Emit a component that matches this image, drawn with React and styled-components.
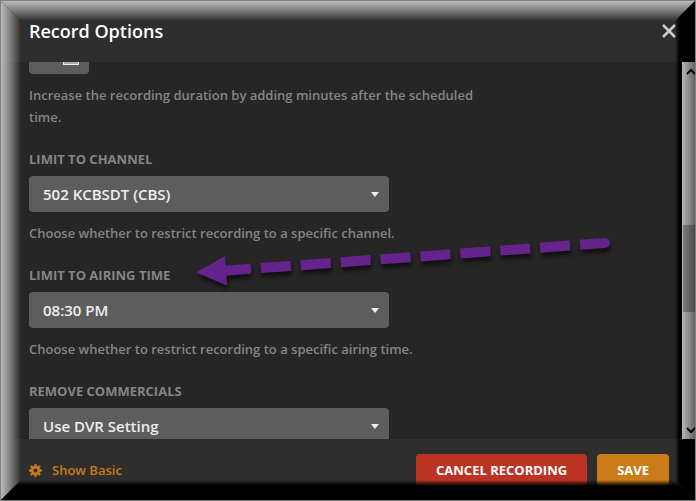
import React, { useLayoutEffect, useRef } from 'react';
import styled, { createGlobalStyle } from 'styled-components';

const GlobalStyle = createGlobalStyle`
  * {
    box-sizing: border-box;
  }
  body {
    margin: 0;
    background: #262626;
    font-family: "Open Sans", "Noto Sans", sans-serif;
    font-weight: 600;
  }
`

const Dialog = styled.div`
  position: relative;
  display: flex;
  flex-direction: column;
  height: 100vh;
  background: #2e2e2e;
  overflow: hidden;
`

const Header = styled.header`
  display: flex;
  flex: none;
  align-items: center;
  justify-content: space-between;
  height: 62px;
  padding: 0 20px 0 29px;
`

const Title = styled.h1`
  margin: 0;
  color: #fff;
  font-size: 18px;
  font-weight: 600;
  line-height: 24px;
`

const CloseButton = styled.button`
  display: flex;
  padding: 0;
  border: 0;
  background: none;
  color: #ccc;
`

const Body = styled.div`
  position: relative;
  display: flex;
  flex: 1;
  min-height: 0;
  background: #262626;
`

const Content = styled.form`
  flex: 1;
  padding: 0 29px;
  overflow: auto;
  scrollbar-width: none;
`

const Field = styled.div`
  margin-bottom: 21px;
`

const Label = styled.label`
  display: block;
  margin-bottom: 7px;
  color: #858585;
  font-size: 13px;
  font-weight: 700;
  line-height: 20px;
  text-transform: uppercase;
`

const Help = styled.p`
  max-width: 460px;
  margin: 10px 0 0;
  color: #858585;
  font-size: 13px;
  line-height: 22px;
`

const Control = styled.div`
  display: flex;
  align-items: center;
  width: ${props => (props.$small ? '60px' : '360px')};
  height: 36px;
  padding-right: 10px;
  border-radius: 4px;
  background: #5d5d5d;
  color: #eee;
`

const Select = styled.select`
  flex: 1;
  min-width: 0;
  height: 36px;
  padding: 0 14px;
  border: 0;
  appearance: none;
  background: none;
  color: #eee;
  font: 600 15px "Open Sans", "Noto Sans", sans-serif;
`

const NumberInput = styled.input`
  flex: 1;
  min-width: 0;
  border: 0;
  background: none;
`

const Stepper = styled.span`
  width: 16px;
  height: 18px;
  border: 1px solid #eee;
  background: #aaa;
  box-shadow: inset 0 0 0 1px #aaa;
`

const ScrollTrack = styled.div`
  z-index: 2;
  display: flex;
  flex: none;
  flex-direction: column;
  align-items: flex-end;
  width: 13px;
  margin-right: 1px;
  background: linear-gradient(to right, #b5b5b5, #646464);
`

const ScrollThumb = styled.div`
  flex: 87;
  width: 12px;
  background: linear-gradient(to right, #7d7d7d, #484848);
`

const ScrollSpace = styled.div`
  display: flex;
  flex: ${props => props.$grow};
  flex-direction: column;
  justify-content: ${props => (props.$end ? 'flex-end' : 'flex-start')};
  padding: 6px 0 5px;
`

const Footer = styled.footer`
  display: flex;
  flex: none;
  align-items: center;
  gap: 10px;
  height: 62px;
  padding: 0 27px 0 29px;
`

const BasicLink = styled.a`
  display: flex;
  align-items: center;
  gap: 10px;
  margin-right: auto;
  color: #cc7b19;
  font-size: 13px;
  text-decoration: none;
`

const Button = styled.button`
  height: 32px;
  padding: 0 20px;
  border: 0;
  border-radius: 4px;
  background: ${props => (props.$danger ? '#bc3323' : '#cc7b19')};
  color: #fff;
  font: 700 13px "Open Sans", "Noto Sans", sans-serif;
  text-transform: uppercase;
`

const Bevel = styled.div`
  position: absolute;
  inset: 0;
  pointer-events: none;
`

const TopEdge = styled(Bevel)`
  bottom: auto;
  height: 21px;
  background: linear-gradient(to bottom, #c0c0c0, rgba(160, 160, 160, .7) 50%, rgba(46, 46, 46, 0));
  clip-path: polygon(0 0, 100% 0, calc(100% - 21px) 100%, 21px 100%);
`

const LeftEdge = styled(Bevel)`
  right: auto;
  width: 21px;
  background: linear-gradient(to right, #c0c0c0, rgba(160, 160, 160, .7) 50%, rgba(46, 46, 46, 0));
  clip-path: polygon(0 0, 100% 21px, 100% calc(100% - 21px), 0 100%);
`

const RightEdge = styled(Bevel)`
  left: auto;
  width: 21px;
  background: linear-gradient(to left, #000 16px, rgba(0, 0, 0, .7) 18px, transparent);
  clip-path: polygon(100% 0, 100% 100%, 0 calc(100% - 21px), 0 21px);
`

const BottomEdge = styled(Bevel)`
  top: auto;
  height: 21px;
  background: linear-gradient(to top, #000 15px, rgba(0, 0, 0, .7) 17px, transparent);
  clip-path: polygon(0 100%, 21px 0, calc(100% - 21px) 0, 100% 100%);
`

const Outline = styled(Bevel)`
  z-index: 3;
  border: 1px solid #808080;
`

const Arrow = styled.svg`
  position: absolute;
  top: 168px;
  left: 190px;
  pointer-events: none;
  filter: drop-shadow(1px 4px 2px rgba(0, 0, 0, .6));
`

const Chevron = ({ d }) => (
  <svg width="13" height="7" viewBox="0 0 13 7" fill="none" stroke="#000" strokeWidth="2">
    <path d={d} />
  </svg>
)

const SelectField = ({ id, label, value, help }) => (
  <Field>
    <Label htmlFor={id}>{label}</Label>
    <Control>
      <Select id={id} defaultValue={value}>
        <option>{value}</option>
      </Select>
      <svg width="8" height="5" viewBox="0 0 8 5">
        <path d="M0 0h8L4 5z" fill="#eee" />
      </svg>
    </Control>
    {help && <Help>{help}</Help>}
  </Field>
)

const teeth = [0, 45, 90, 135, 180, 225, 270, 315]

export default function App() {
  const content = useRef(null)

  useLayoutEffect(() => {
    content.current.scrollTop = 24
  }, [])

  return (
    <Dialog role="dialog" aria-label="Record Options">
      <GlobalStyle />
      <Header>
        <Title>Record Options</Title>
        <CloseButton aria-label="Close">
          <svg width="14" height="14" viewBox="0 0 14 14" stroke="currentColor" strokeWidth="2.6">
            <path d="M1 1l12 12M13 1L1 13" />
          </svg>
        </CloseButton>
      </Header>
      <Body>
        <Content ref={content}>
          <Field>
            <Control $small>
              <NumberInput aria-label="Minutes after" />
              <Stepper />
            </Control>
            <Help>Increase the recording duration by adding minutes after the scheduled time.</Help>
          </Field>
          <SelectField
            id="channel"
            label="Limit to channel"
            value="502 KCBSDT (CBS)"
            help="Choose whether to restrict recording to a specific channel."
          />
          <SelectField
            id="airing"
            label="Limit to airing time"
            value="08:30 PM"
            help="Choose whether to restrict recording to a specific airing time."
          />
          <SelectField id="commercials" label="Remove commercials" value="Use DVR Setting" />
        </Content>
        <ScrollTrack>
          <ScrollSpace $grow={152}>
            <Chevron d="M5 6l4-4 4 4" />
          </ScrollSpace>
          <ScrollThumb />
          <ScrollSpace $grow={116} $end>
            <Chevron d="M5 1l4 4 4-4" />
          </ScrollSpace>
        </ScrollTrack>
        <Arrow width="430" height="70" viewBox="190 230 430 70">
          <path d="M221 271L605 243" stroke="#65248b" strokeWidth="10" strokeDasharray="30 10" />
          <circle cx="605" cy="243" r="5" fill="#65248b" />
          <path d="M196 272.500L225 256L227 285.500z" fill="#65248b" />
        </Arrow>
      </Body>
      <Footer>
        <BasicLink href="#basic">
          <svg width="13" height="13" viewBox="-6.500 -6.500 13 13">
            {teeth.map(a => (
              <path key={a} d="M-1.500 -4L-1 -6.500H1L1.500 -4z" fill="#cc7b19" transform={`rotate(${a})`} />
            ))}
            <circle r="3.300" fill="none" stroke="#cc7b19" strokeWidth="2.600" />
          </svg>
          Show Basic
        </BasicLink>
        <Button $danger>Cancel Recording</Button>
        <Button>Save</Button>
      </Footer>
      <TopEdge />
      <LeftEdge />
      <RightEdge />
      <BottomEdge />
      <Outline />
    </Dialog>
  )
}
